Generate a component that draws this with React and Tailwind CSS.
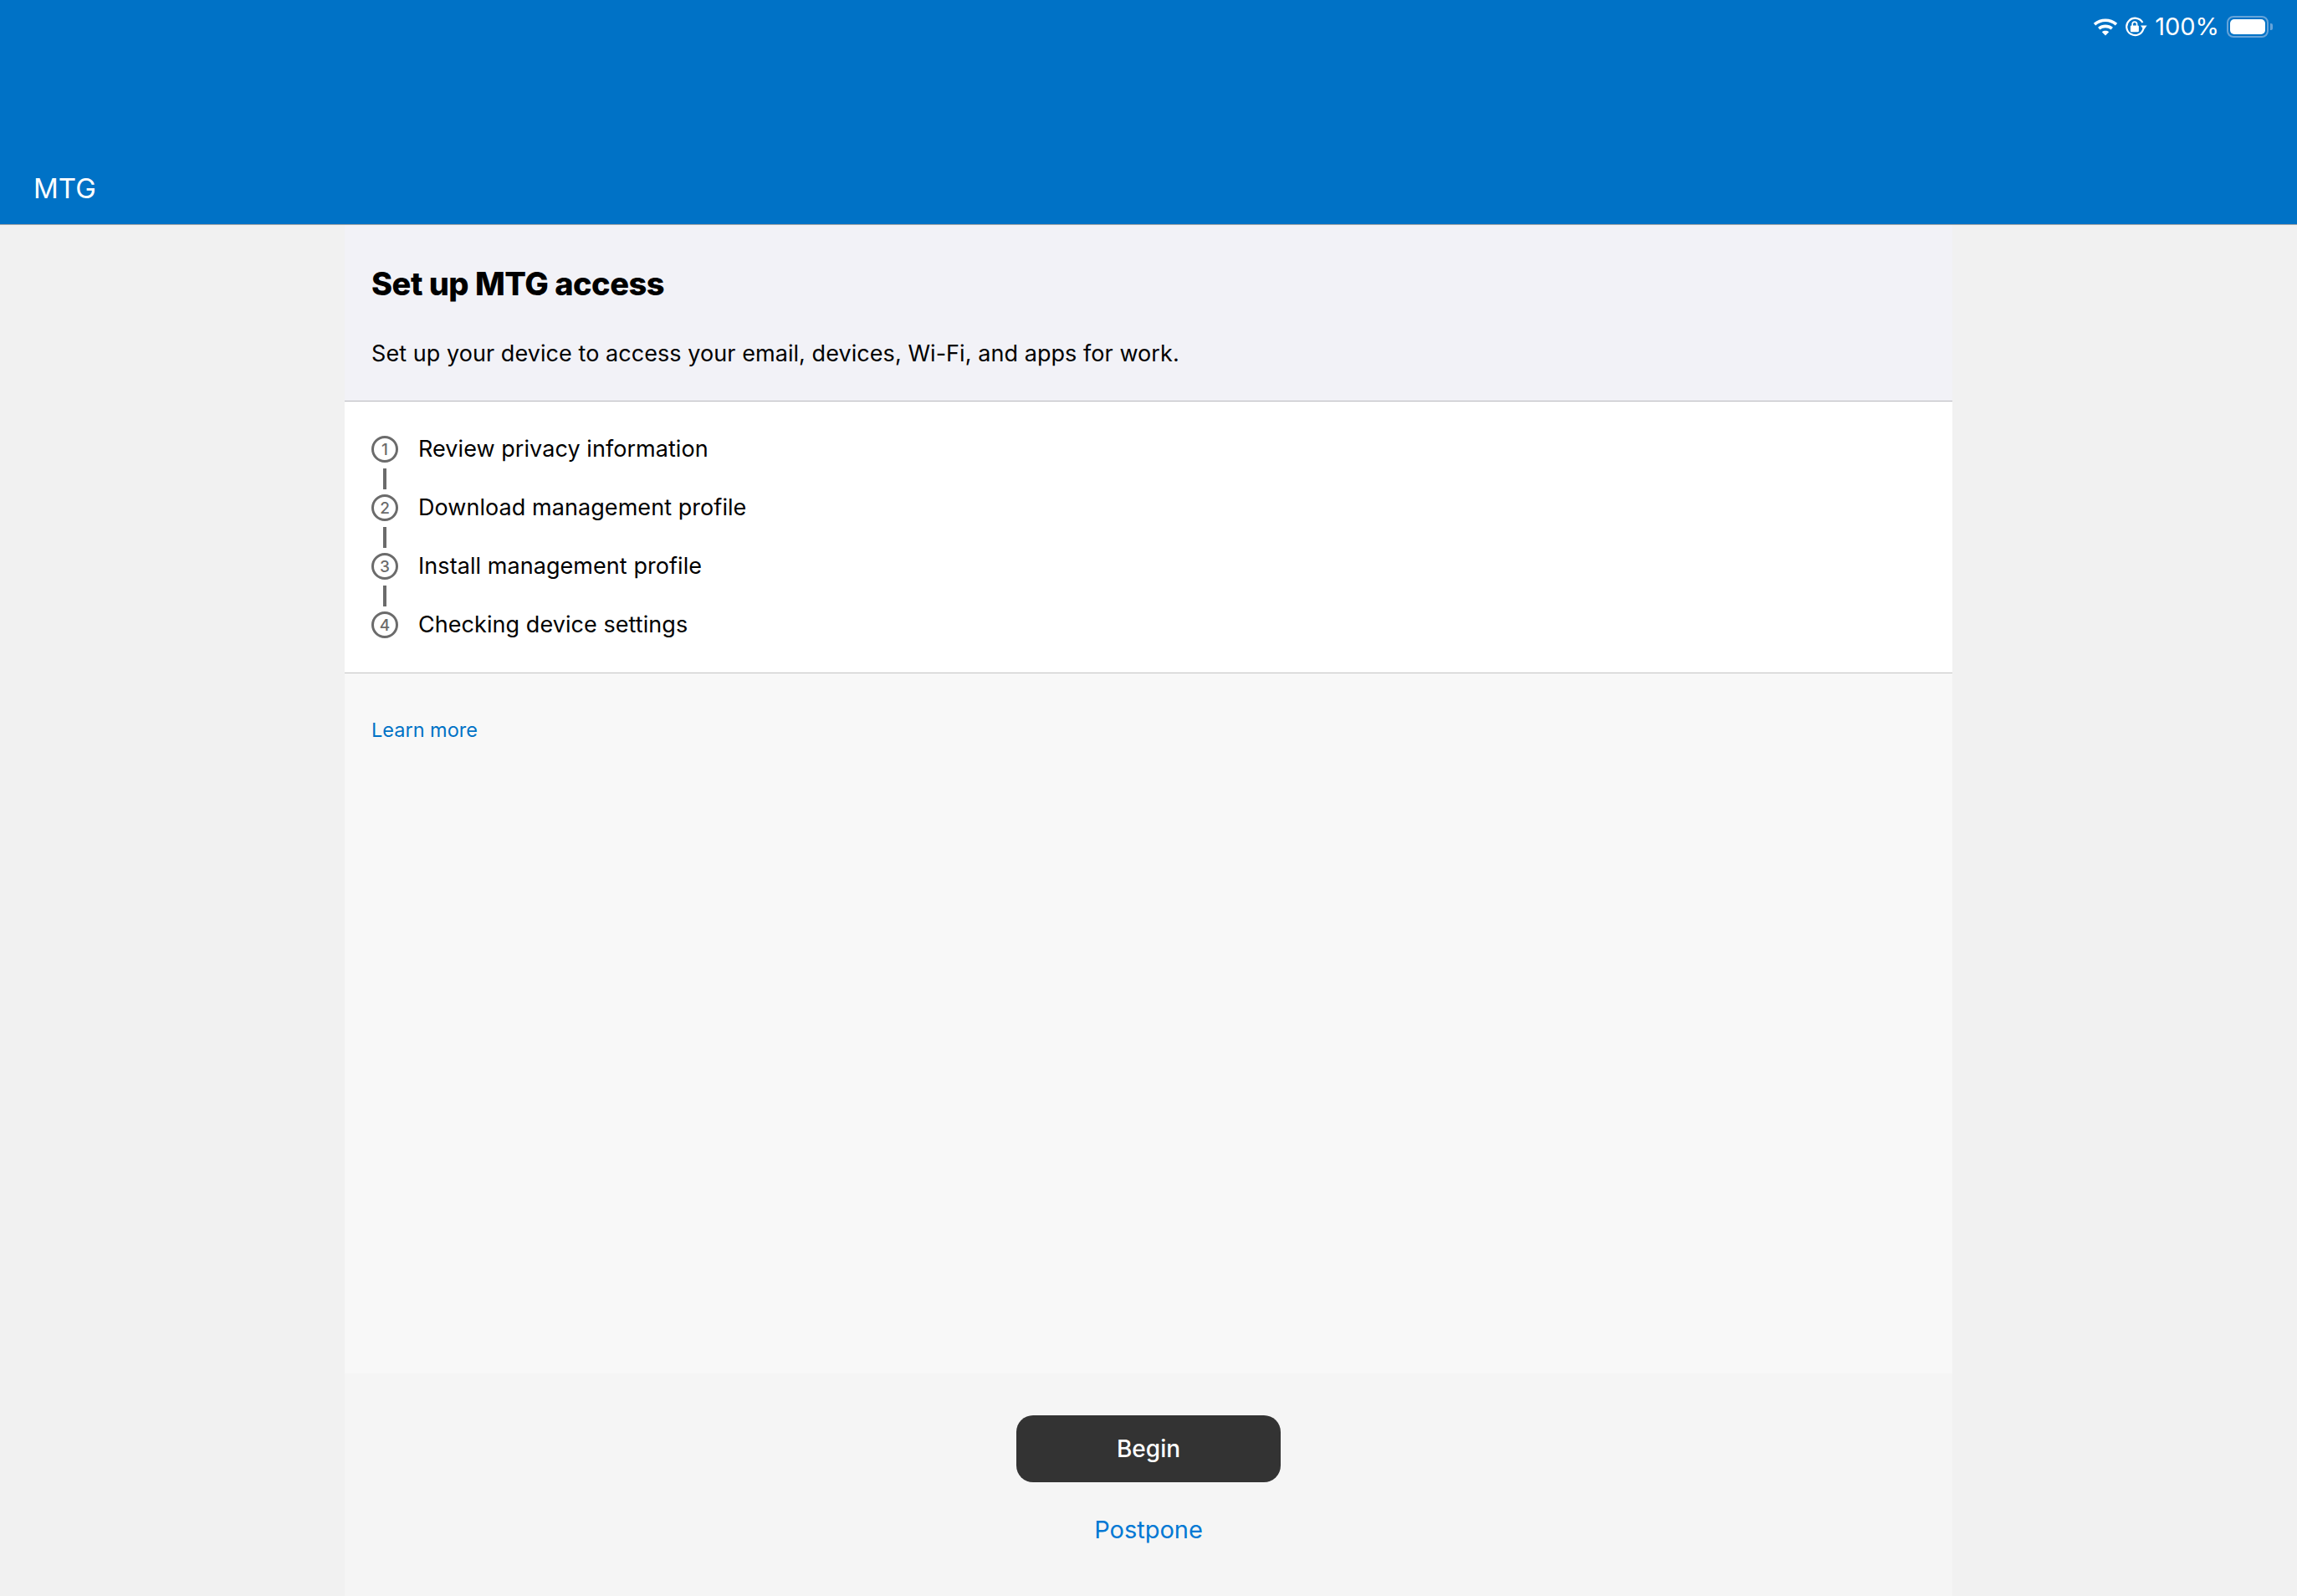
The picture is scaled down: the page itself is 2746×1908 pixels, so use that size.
const font = { fontFamily: "Inter, 'Noto Sans', sans-serif" };

const steps = [
  "Review privacy information",
  "Download management profile",
  "Install management profile",
  "Checking device settings",
];

function Wifi() {
  return (
    <svg width="30" height="22" viewBox="0 0 30 22" fill="none">
      <path d="M2 8.2C9.5 1.6 20.5 1.6 28 8.2" stroke="white" strokeWidth="3.6" strokeLinecap="butt" />
      <path d="M7.2 13.2C11.8 9.4 18.2 9.4 22.8 13.2" stroke="white" strokeWidth="3.6" />
      <path d="M15 21.5L10.8 17.2C13.2 15.4 16.8 15.4 19.2 17.2Z" fill="white" />
    </svg>
  );
}

function RotationLock() {
  return (
    <svg width="27" height="24" viewBox="0 0 27 24" fill="none">
      <path d="M22.4 14.2A10.2 10.2 0 1 1 21.4 7" stroke="white" strokeWidth="2.2" />
      <path d="M19 10.6H26.6L22.8 15.8Z" fill="white" />
      <rect x="6.9" y="10.6" width="10" height="7.6" rx="1.2" fill="white" />
      <path d="M9.2 11V8.8A2.7 2.7 0 0 1 14.6 8.8V11" stroke="white" strokeWidth="1.7" />
    </svg>
  );
}

function Battery() {
  return (
    <div className="flex items-center">
      <div className="flex h-[26px] w-[50px] items-center justify-center rounded-[8px] border-2 border-[#66a4da]">
        <div className="h-[18px] w-[42px] rounded-[5px] bg-white" />
      </div>
      <div className="ml-[2px] h-[8px] w-[3px] rounded-r-[2px] bg-[#66a4da]" />
    </div>
  );
}

function StepCircle({ n }) {
  return (
    <div className="flex h-[32px] w-[32px] items-center justify-center rounded-full border-[3px] border-[#6b6b6b] text-[19px] font-medium leading-none text-[#6b6b6b]">
      {n}
    </div>
  );
}

export default function App() {
  return (
    <div className="flex h-[1908px] w-full flex-col overflow-hidden bg-[#f1f1f1]" style={font}>
      <header className="flex h-[269px] flex-col justify-between border-b border-[#a8a8a8] bg-[#0072c6] text-white">
        <div className="flex items-center justify-end gap-[9px] pr-[29px] pt-[18px]">
          <div className="flex items-center gap-[8px]">
            <Wifi />
            <RotationLock />
          </div>
          <span className="text-[29px] leading-[28px]">100%</span>
          <Battery />
        </div>
        <div className="pb-[23px] pl-[40px] text-[33px] leading-[40px]">MTG</div>
      </header>

      <main className="mx-auto flex w-[1922px] flex-1 flex-col bg-[#f8f8f8]">
        <section className="h-[211px] border-b border-[#b8b8bd] bg-[#f2f2f7] px-[32px] pt-[46px]">
          <h1 className="text-[38px] font-extrabold leading-[48px] tracking-[-0.5px] text-black">Set up MTG access</h1>
          <p className="mt-[43px] text-[27px] leading-[34px] tracking-[0.06px] text-black">
            Set up your device to access your email, devices, Wi-Fi, and apps for work.
          </p>
        </section>

        <section className="h-[325px] border-b border-[#c4c4c4] bg-white px-[32px] pt-[41px]">
          {steps.map((s, i) => (
            <div key={s}>
              <div className="flex h-[32px] items-center gap-[24px]">
                <StepCircle n={i + 1} />
                <span className="text-[27px] leading-[32px] tracking-[0.06px] text-black">{s}</span>
              </div>
              {i < steps.length - 1 && (
                <div className="flex h-[38px] w-[32px] items-center justify-center">
                  <div className="h-[25px] w-[4px] bg-[#6b6b6b]" />
                </div>
              )}
            </div>
          ))}
        </section>

        <section className="flex-1 px-[32px] pt-[53px]">
          <a className="text-[23.5px] leading-[30px] text-[#0072c6]">Learn more</a>
        </section>

        <footer className="flex h-[266px] flex-col items-center bg-[#f5f5f5] pt-[50px]">
          <button className="h-[80px] w-[316px] rounded-[20px] bg-[#333333] text-[28px] font-medium text-white">
            Begin
          </button>
          <a className="mt-[26px] text-[29px] leading-[62px] text-[#0078d4]">Postpone</a>
        </footer>
      </main>
    </div>
  );
}
